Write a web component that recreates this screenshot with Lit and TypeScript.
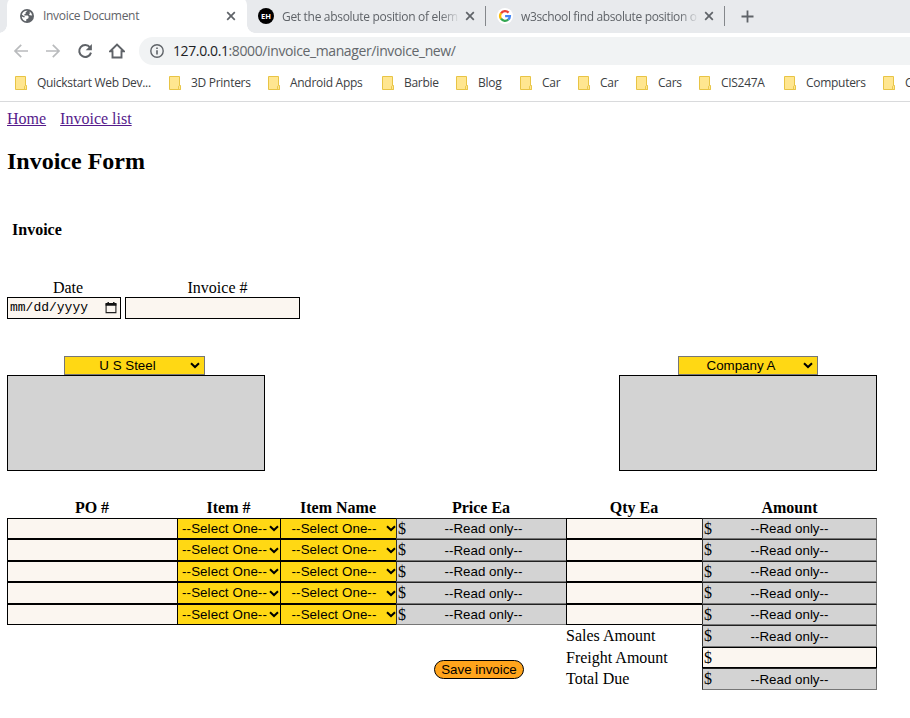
import { LitElement, html, css, svg } from "lit";
import { customElement } from "lit/decorators.js";

const closeIcon = svg`<svg width="10" height="10" viewBox="0 0 10 10"><path d="M1.2 1.2l7.6 7.6M8.8 1.2L1.2 8.8" stroke="#5f6368" stroke-width="1.7" fill="none"/></svg>`;
const globeIcon = svg`<svg width="14" height="14" viewBox="0 0 14 14"><circle cx="7" cy="7" r="7" fill="#5f6368"/><path d="M7.6 1.7L5.6 3.3 5.8 4.6 4.2 5.6 4.4 6.4 7.6 6.5 8.8 7.8 8.2 9.4 6.3 10.3 6.2 12.3A5.5 5.5 0 0 1 1.7 7.6L4.2 8.4 5 7.6 3.8 7 1.8 5.6A5.5 5.5 0 0 1 7.6 1.7zM9.4 2.6L10 4.2 9 5.2 9.8 6.2 12.2 6.4A5.6 5.6 0 0 0 9.4 2.6z" fill="#fff"/></svg>`;
const googleIcon = svg`<svg width="16" height="16" viewBox="0 0 16 16"><circle cx="8" cy="8" r="8" fill="#fff"/><g fill="none" stroke-width="2.3"><path d="M4 5.3A4.8 4.8 0 0 1 11.6 4.6" stroke="#ea4335"/><path d="M4 5.2A4.9 4.9 0 0 0 4 10.8" stroke="#fbbc05"/><path d="M4 10.7A4.8 4.8 0 0 0 11.3 11.5" stroke="#34a853"/><path d="M8.1 8.1H12.9A4.8 4.8 0 0 1 11.2 11.6" stroke="#4285f4"/></g></svg>`;
const folderIcon = svg`<svg class="folder" width="13" height="14" viewBox="0 0 13 14"><path d="M.5.5h10v9h1v4H.5z" fill="#ffe690" stroke="#e8c445"/><path d="M9.5 13.5v-3.2l1-.8 1 .8v3.2z" fill="#ffe690" stroke="#e8c445" stroke-width=".9"/></svg>`;
const chevron = svg`<svg class="chev" width="10" height="7" viewBox="0 0 10 7"><path d="M1 1.2L5 5l4-3.8" fill="none" stroke="#000" stroke-width="2"/></svg>`;

@customElement("app-root")
export class AppRoot extends LitElement {
  static styles = css`
    * { box-sizing: border-box; }
    :host { display: block; width: 910px; height: 718px; overflow: hidden; background: #fff; color: #000;
      font: 16px/18px "Liberation Serif", serif; }
    svg { display: block; flex: none; }
    .strip { height: 33px; display: flex; background: #e8eaed; padding-left: 7px;
      font: 12px/33px "Open Sans", "Noto Sans", sans-serif; letter-spacing: -.31px; color: #5f6368; }
    .tab { display: flex; align-items: center; height: 32px; position: relative; }
    .tab span { white-space: nowrap; overflow: hidden; }
    .active { width: 240px; height: 36px; margin-top: -3px; padding: 3px 11px 2px 13px; background: #fff; border-radius: 8px 8px 0 0; }
    .active::before, .active::after { content: ""; position: absolute; bottom: 0; width: 8px; height: 8px; }
    .active::before { left: -8px; background: radial-gradient(circle at 0 0, transparent 7.5px, #fff 8px); }
    .active::after { right: -8px; background: radial-gradient(circle at 100% 0, transparent 7.5px, #fff 8px); }
    .t1 { margin-left: 9px; flex: 1; }
    .second { width: 238px; padding-left: 11px; }
    .third { width: 238px; padding-left: 11px; }
    .eh { width: 16px; height: 16px; border-radius: 8px; background: #000; color: #fff; font: bold 7.5px/16px "Open Sans", sans-serif; letter-spacing: 0; text-align: center; flex: none; }
    .fade { width: 176px; margin: 0 7px 0 8px; -webkit-mask-image: linear-gradient(90deg, #000 158px, transparent 178px); }
    .third .fade { letter-spacing: -.36px; }
    .divider { width: 1px; height: 20px; margin-top: 6px; background: #84878b; }
    .plus { margin: 10px 0 0 16px; }
    .toolbar { height: 36px; display: flex; align-items: center; padding: 0 0 0 13px; }
    .toolbar .ic { margin-right: 16px; }
    .omni { flex: 1; margin-left: 14px; height: 28px; border-radius: 14px 0 0 14px; background: #f1f3f4; display: flex; align-items: center; padding-left: 11px;
      font: 14px/28px "Open Sans", "Noto Sans", sans-serif; letter-spacing: -.39px; color: #63676b; }
    .omni b { font-weight: 400; color: #202124; }
    .url { margin-left: 9px; white-space: nowrap; }
    .marks { height: 33px; border-bottom: 1px solid #d9dadc; display: grid; align-items: center; overflow: hidden;
      grid-template-columns: 154px 99px 114px 74px 64px 58px 58px 63px 85px 99px 60px; padding-left: 15px;
      font: 12px/28px "Open Sans", "Noto Sans", sans-serif; letter-spacing: -.29px; color: #3c4043; }
    .marks div { display: flex; align-items: center; gap: 9px; white-space: nowrap; height: 28px; margin-top: -4px; }
    .page { padding: 0 7px; }
    .nav { display: flex; gap: 14px; padding-top: 8px; }
    a { color: #551a8b; text-decoration: underline; }
    h2 { margin: 19px 0 0; font: bold 24px/28px "Liberation Serif", serif; }
    h4 { margin: 46px 0 0 5px; font: bold 16px/18px "Liberation Serif", serif; }
    .ident { display: flex; gap: 4px; margin-top: 40px; text-align: center; }
    .box { height: 22px; border: 1px solid #000; background: #fbf6f0; }
    .date { width: 114px; display: flex; align-items: center; justify-content: space-between; padding: 0 3px 0 2px; font: 13px/20px "Liberation Mono", monospace; }
    .date span { white-space: pre; }
    .f1 { width: 114px; padding: 0; }
    .f1 label { display: block; padding-left: 8px; }
    .f2 { width: 175px; }
    .f2 label { display: block; padding-left: 10px; }
    .parties { display: flex; justify-content: space-between; margin-top: 37px; width: 870px; }
    .party { width: 258px; display: flex; flex-direction: column; align-items: center; }
    .sel { font: 13.333px/18px "Liberation Sans", sans-serif; background: #ffd814; display: flex; align-items: center; text-align: center; }
    .sel span { flex: 1; white-space: nowrap; }
    .party .sel { width: 141px; height: 19px; border: 1px solid #767676; padding: 0 4px 0 0; line-height: 17px; }
    .party:first-child .sel { margin-right: 3px; }
    .party:last-child .sel { width: 140px; margin-right: 0; }
    .addr { width: 258px; height: 96px; border: 1px solid #000; background: #d3d3d3; }
    .grid { margin-top: 28px; width: 870px; display: grid; grid-template-columns: 170px 103px 116px 170px 136px 175px;
      grid-template-rows: 19px 21px 22px 21px 22px 21px 22px 21px 22px; }
    .th { font-weight: bold; text-align: center; line-height: 18px; }
    .in { background: #fbf6f0; border: 1px solid #000; border-right: 0; }
    .grid .sel { border: 1px solid #000; border-right: 0; padding: 0 1px 0 3px; min-width: 0; letter-spacing: .08px; }
    .grid .name { padding: 0 0 0 2px; }
    .grid .sel .chev { margin-left: 1px; }
    .ro { background: #d3d3d3; border: 1px solid #767676; border-top-color: #202020; border-right: 0; display: flex; align-items: center; padding-left: 1px; }
    .ro i { font: 13.333px/19px "Liberation Sans", sans-serif; flex: 1; text-align: center; padding-right: 5px; }
    .price { border-left-color: #303030; }
    .amt { border-right: 1px solid #767676; border-left-color: #303030; }
    .amt i { padding-right: 9px; }
    .free { background: #fbf6f0; border-color: #000; }
    .lbl { grid-column: 5; line-height: 22px; white-space: nowrap; }
    .save { grid-column: 4; grid-row: 8 / 10; justify-self: start; margin: 13px 0 0 38px; width: 90px; height: 19px; border: 1px solid #000; border-radius: 10px;
      background: #ffa41c; padding: 0; color: #000; font: 13.333px/17px "Liberation Sans", sans-serif; }
  `;

  private bookmarks = ["Quickstart Web Dev...", "3D Printers", "Android Apps", "Barbie", "Blog", "Car", "Car", "Cars", "CIS247A", "Computers", "C"];

  private readOnly(cls: string) {
    return html`<div class="ro ${cls}">$<i>--Read only--</i></div>`;
  }

  private itemRow() {
    return html`
      <div class="in"></div>
      <div class="sel"><span>--Select One--</span>${chevron}</div>
      <div class="sel name"><span>--Select One--</span>${chevron}</div>
      ${this.readOnly("price")}
      <div class="in"></div>
      ${this.readOnly("amt")}`;
  }

  render() {
    return html`
      <div class="strip">
        <div class="tab active">${globeIcon}<span class="t1">Invoice Document</span>${closeIcon}</div>
        <div class="tab second"><div class="eh">EH</div><span class="fade">Get the absolute position of elem</span>${closeIcon}</div>
        <div class="divider"></div>
        <div class="tab third">${googleIcon}<span class="fade">w3school find absolute position o</span>${closeIcon}</div>
        <div class="divider"></div>
        <svg class="plus" width="13" height="13" viewBox="0 0 13 13"><path d="M6.5.5v12M.5 6.5h12" stroke="#5f6368" stroke-width="1.8"/></svg>
      </div>
      <div class="toolbar">
        <svg class="ic" width="16" height="16" viewBox="0 0 16 16"><path d="M8.2 1.8L2 8l6.2 6.2M2 8h13" fill="none" stroke="#b9bbbd" stroke-width="1.7"/></svg>
        <svg class="ic" width="16" height="16" viewBox="0 0 16 16"><path d="M7.8 1.8L14 8l-6.2 6.2M14 8H1" fill="none" stroke="#b9bbbd" stroke-width="1.7"/></svg>
        <svg class="ic" width="16" height="16" viewBox="0 0 16 16"><path d="M13 4.3A6 6 0 1 0 14 9.6" fill="none" stroke="#5f6368" stroke-width="2"/><path d="M14.9 1v6.2H8.7z" fill="#5f6368"/></svg>
        <svg width="16" height="16" viewBox="0 0 16 16"><path d="M1.2 8.2L8 1.5l6.8 6.7h-2.3v6.3h-9V8.2z" fill="none" stroke="#5f6368" stroke-width="1.9"/></svg>
        <div class="omni">
          <svg width="14" height="14" viewBox="0 0 14 14"><circle cx="7" cy="7" r="6.2" fill="none" stroke="#5f6368" stroke-width="1.4"/><path d="M7 6.2v4.2M7 3.4v1.6" stroke="#5f6368" stroke-width="1.6"/></svg>
          <span class="url"><b>127.0.0.1</b>:8000/invoice_manager/invoice_new/</span>
        </div>
      </div>
      <div class="marks">${this.bookmarks.map((b) => html`<div>${folderIcon}<span>${b}</span></div>`)}</div>
      <div class="page">
        <nav class="nav"><a>Home</a><a>Invoice list</a></nav>
        <h2>Invoice Form</h2>
        <h4>Invoice</h4>
        <div class="ident">
          <div class="f1"><label>Date</label>
            <div class="box date"><span>mm/dd/yyyy</span>
              <svg width="12" height="12" viewBox="0 0 12 12"><path d="M1.1 2h9.8v8.6H1.1z" fill="none" stroke="#222" stroke-width="1.1"/><path d="M.6 1h10.8v2.8H.6zM2.5 0h1.4v2H2.5zM8.1 0h1.4v2H8.1z" fill="#111"/></svg>
            </div>
          </div>
          <div class="f2"><label>Invoice #</label><div class="box"></div></div>
        </div>
        <div class="parties">
          <div class="party"><div class="sel"><span>U S Steel</span>${chevron}</div><div class="addr"></div></div>
          <div class="party"><div class="sel"><span>Company A</span>${chevron}</div><div class="addr"></div></div>
        </div>
        <div class="grid">
          ${["PO #", "Item #", "Item Name", "Price Ea", "Qty Ea", "Amount"].map((h) => html`<div class="th">${h}</div>`)}
          ${[0, 1, 2, 3, 4].map(() => this.itemRow())}
          <div class="lbl">Sales Amount</div>${this.readOnly("amt")}
          <div class="lbl">Freight Amount</div><div class="ro amt free">$</div>
          <div class="lbl">Total Due</div>${this.readOnly("amt")}
          <button class="save">Save invoice</button>
        </div>
      </div>`;
  }
}
